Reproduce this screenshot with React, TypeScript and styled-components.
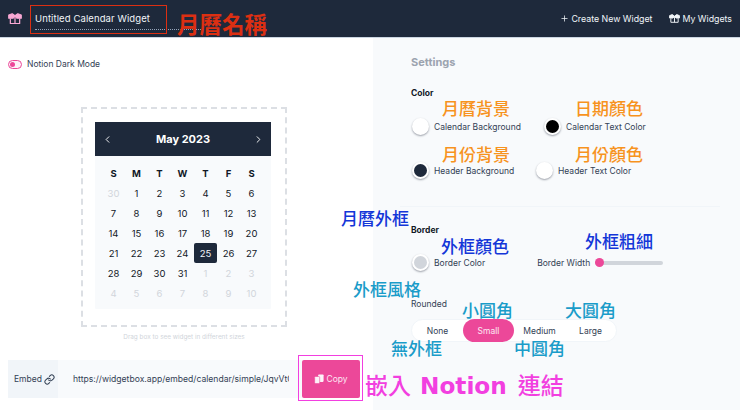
import React from "react";
import styled, { createGlobalStyle } from "styled-components";
import { Plus, Link, ChevronLeft, ChevronRight } from "lucide-react";

const GlobalStyle = createGlobalStyle`
  html, body { margin: 0; padding: 0; background: #fff; }
  body { font-family: Inter, "Noto Sans CJK TC", sans-serif; }
`;

const Page = styled.div`
  position: relative;
  width: 740px;
  height: 410px;
  overflow: hidden;
  display: flex;
  flex-direction: column;
  color: #334155;
`;

const Header = styled.header`
  height: 38px;
  flex: none;
  background: #1e293b;
  display: flex;
  align-items: center;
  padding: 0 8px;
  color: #f1f5f9;
  font-size: 9px;
  border-bottom: 1px solid #cbd5e1;
  box-sizing: border-box;
`;

const TitleField = styled.div`
  margin-left: 13px;
  width: 168px;
  height: 21px;
  line-height: 20px;
  margin-top: 2px;
  font-size: 9.5px;
  box-sizing: border-box;
  border-bottom: 1px dotted #94a3b8;
  letter-spacing: 0.1px;
`;

const HeaderLinks = styled.nav`
  margin-left: auto;
  display: flex;
  align-items: center;
  gap: 17px;
`;

const HeaderLink = styled.span`
  display: flex;
  align-items: center;
  gap: 2px;
  font-size: 8.8px;
`;

const Body = styled.div`
  flex: 1;
  display: flex;
  min-height: 0;
`;

const LeftPane = styled.main`
  width: 373px;
  flex: none;
  box-sizing: border-box;
  padding: 19px 10px 0 8px;
  display: flex;
  flex-direction: column;
`;

const ToggleRow = styled.div`
  display: flex;
  align-items: center;
  gap: 5px;
  font-size: 8.5px;
  height: 14px;
`;

const Toggle = styled.span`
  width: 14px;
  height: 9px;
  border: 1.2px solid #ec4899;
  border-radius: 5px;
  background: #fdf2f8;
  box-sizing: border-box;
  display: flex;
  align-items: center;
  padding-left: 1px;

  &::before {
    content: "";
    width: 5px;
    height: 5px;
    border-radius: 50%;
    background: #ec4899;
  }
`;

const DragBox = styled.div`
  width: 206px;
  height: 220px;
  margin: 36px 0 0 73px;
  box-sizing: border-box;
  border: 2px dashed #dcdfe4;
  padding: 13px 12px;
`;

const Calendar = styled.div`
  width: 176px;
  height: 187px;
  background: #f8fafc;
  border-radius: 1px;
`;

const CalendarHead = styled.div`
  height: 34px;
  background: #1e293b;
  color: #fff;
  display: flex;
  align-items: center;
  justify-content: space-between;
  padding: 0 7px 0 7px;
  font-size: 11px;
  font-weight: 700;
`;

const DayGrid = styled.div`
  display: grid;
  grid-template-columns: repeat(7, 23px);
  grid-auto-rows: 20px;
  padding: 7px 7px 0 7px;
  justify-content: start;
`;

const Cell = styled.div<{ $kind?: "head" | "muted" | "active" }>`
  display: flex;
  align-items: center;
  justify-content: center;
  font-size: 9.5px;
  border-radius: 2px;
  font-weight: ${(p) => (p.$kind === "head" ? 700 : 400)};
  color: ${(p) =>
    p.$kind === "muted" ? "#d1d5db" : p.$kind === "active" ? "#f1f5f9" : "#111827"};
  background: ${(p) => (p.$kind === "active" ? "#1e293b" : "transparent")};
`;

const Caption = styled.div`
  margin: 6px 0 0 73px;
  width: 206px;
  text-align: center;
  font-size: 6.4px;
  color: #d1d5db;
  line-height: 8px;
`;

const EmbedBar = styled.div`
  margin-top: 19px;
  display: flex;
  height: 38px;
`;

const EmbedLabel = styled.div`
  width: 50px;
  flex: none;
  box-sizing: border-box;
  padding-left: 6px;
  background: #f1f5f9;
  display: flex;
  align-items: center;
  gap: 2px;
  font-size: 8.5px;
`;

const EmbedUrl = styled.div`
  width: 244px;
  flex: none;
  background: #f8fafc;
  box-sizing: border-box;
  padding-left: 15px;
`;

const UrlText = styled.div`
  width: 216px;
  line-height: 38px;
  font-size: 8.6px;
  white-space: nowrap;
  overflow: hidden;
`;

const CopyButton = styled.button`
  width: 58px;
  border: 0;
  padding: 0;
  background: #ec4899;
  border-radius: 2px;
  color: #fce7f3;
  font: inherit;
  font-size: 8.5px;
  display: flex;
  align-items: center;
  justify-content: center;
  gap: 2px;
`;

const RightPane = styled.aside`
  flex: 1;
  background: #f8fafc;
  box-sizing: border-box;
  padding: 18px 20px 0 38px;
`;

const SettingsTitle = styled.div`
  font-size: 11px;
  font-weight: 700;
  color: #9ca3af;
  line-height: 13px;
  margin-bottom: 19px;
`;

const GroupLabel = styled.div`
  font-size: 8.5px;
  font-weight: 700;
  color: #111827;
  line-height: 10px;
`;

const ColorGrid = styled.div`
  margin-top: 20px;
  display: grid;
  grid-template-columns: 132px 1fr;
  row-gap: 27px;
`;

const ColorItem = styled.div<{ $shift?: number }>`
  display: flex;
  align-items: center;
  gap: 5px;
  font-size: 8.5px;
  height: 17px;
  margin-left: ${(p) => p.$shift ?? 1}px;
`;

const Swatch = styled.span<{ $color: string }>`
  width: 17px;
  height: 17px;
  flex: none;
  box-sizing: border-box;
  border-radius: 50%;
  background: ${(p) => p.$color};
  border: 2px solid #fff;
  box-shadow: 0 1px 2px rgba(15, 23, 42, 0.4);
`;

const Divider = styled.div`
  height: 1px;
  background: #f1f5f9;
  margin: 27px 0 18px -11px;
`;

const BorderRow = styled.div`
  margin-top: 19px;
  display: flex;
  align-items: center;
`;

const SliderLabel = styled.span`
  margin-left: 52px;
  font-size: 8.5px;
`;

const Slider = styled.div`
  margin-left: 5px;
  width: 68px;
  height: 4px;
  border-radius: 2px;
  background: #d1d5db;
  position: relative;

  &::before {
    content: "";
    position: absolute;
    left: 0;
    top: -2.5px;
    width: 9px;
    height: 9px;
    border-radius: 50%;
    background: #ec4899;
  }
`;

const RoundedLabel = styled.div`
  margin-top: 28px;
  font-size: 8.5px;
  line-height: 10px;
`;

const Segments = styled.div`
  margin-top: 10px;
  width: 206px;
  height: 23px;
  box-sizing: border-box;
  display: grid;
  grid-template-columns: repeat(4, 1fr);
  background: #fff;
  border: 1px solid #f1f5f9;
  border-radius: 12px;
`;

const Segment = styled.span<{ $on?: boolean }>`
  display: flex;
  align-items: center;
  justify-content: center;
  font-size: 8.5px;
  border-radius: 12px;
  margin: -1px 0;
  color: ${(p) => (p.$on ? "#fce7f3" : "#334155")};
  background: ${(p) => (p.$on ? "#ec4899" : "transparent")};
`;

const Note = styled.span<{ $x: number; $y: number; $color: string; $size?: number; $bold?: boolean }>`
  position: absolute;
  left: ${(p) => p.$x}px;
  top: ${(p) => p.$y}px;
  color: ${(p) => p.$color};
  font-size: ${(p) => p.$size ?? 17}px;
  font-weight: ${(p) => (p.$bold ? 700 : 500)};
  line-height: 1;
  white-space: nowrap;
  font-family: "Noto Sans CJK TC", sans-serif;
`;

const NoteBox = styled.span<{ $x: number; $y: number; $w: number; $h: number; $color: string }>`
  position: absolute;
  left: ${(p) => p.$x}px;
  top: ${(p) => p.$y}px;
  width: ${(p) => p.$w}px;
  height: ${(p) => p.$h}px;
  box-sizing: border-box;
  border: 1.5px solid ${(p) => p.$color};
`;

const NotionNote = styled.span`
  font-family: "DejaVu Sans", sans-serif;
  font-weight: 700;
  font-size: 23.2px;
  margin: 0 11px 0 9px;
`;

function GiftBox({ size, color }: { size: number; color: string }) {
  return (
    <svg width={size} height={(size * 12) / 15} viewBox="0 0 15 12" fill="none" stroke={color} strokeWidth="1.3" strokeLinejoin="round">
      <path d="M2.5 6V11.3H12.5V6" />
      <path d="M7.5 3.5V11.3" />
      <path d="M0.8 2.2L4.5 0.8L7.5 3L10.5 0.8L14.2 2.2V5.5H9.5L7.5 3L5.5 5.5H0.8Z" fill={color} />
    </svg>
  );
}

function CopyIcon() {
  return (
    <svg width="10" height="10" viewBox="0 0 12 12" fill="#fdf2f8">
      <rect x="5" y="0.5" width="6.5" height="9" rx="1" />
      <rect x="0.8" y="3" width="6" height="8.5" rx="1" stroke="#ec4899" strokeWidth="0.7" />
    </svg>
  );
}

const days: { n: number; muted?: boolean }[] = [
  { n: 30, muted: true },
  ...Array.from({ length: 31 }, (_, i) => ({ n: i + 1 })),
  ...Array.from({ length: 10 }, (_, i) => ({ n: i + 1, muted: true })),
];

const dayNames = ["S", "M", "T", "W", "T", "F", "S"];

function App() {
  return (
    <Page>
      <GlobalStyle />
      <Header>
        <GiftBox size={14} color="#f9a8d4" />
        <TitleField>Untitled Calendar Widget</TitleField>
        <HeaderLinks>
          <HeaderLink>
            <Plus size={9} strokeWidth={2} />
            Create New Widget
          </HeaderLink>
          <HeaderLink>
            <GiftBox size={11} color="#f1f5f9" />
            My Widgets
          </HeaderLink>
        </HeaderLinks>
      </Header>
      <Body>
        <LeftPane>
          <ToggleRow>
            <Toggle />
            Notion Dark Mode
          </ToggleRow>
          <DragBox>
            <Calendar>
              <CalendarHead>
                <ChevronLeft size={11} strokeWidth={2} />
                May 2023
                <ChevronRight size={11} strokeWidth={2} />
              </CalendarHead>
              <DayGrid>
                {dayNames.map((d, i) => (
                  <Cell key={i} $kind="head">{d}</Cell>
                ))}
                {days.map((d, i) => (
                  <Cell key={i} $kind={d.muted ? "muted" : d.n === 25 ? "active" : undefined}>
                    {d.n}
                  </Cell>
                ))}
              </DayGrid>
            </Calendar>
          </DragBox>
          <Caption>Drag box to see widget in different sizes</Caption>
          <EmbedBar>
            <EmbedLabel>
              Embed
              <Link size={11} strokeWidth={2.2} />
            </EmbedLabel>
            <EmbedUrl>
              <UrlText>https://widgetbox.app/embed/calendar/simple/JqvVtC</UrlText>
            </EmbedUrl>
            <CopyButton>
              <CopyIcon />
              Copy
            </CopyButton>
          </EmbedBar>
        </LeftPane>
        <RightPane>
          <SettingsTitle>Settings</SettingsTitle>
          <GroupLabel>Color</GroupLabel>
          <ColorGrid>
            <ColorItem><Swatch $color="#ffffff" />Calendar Background</ColorItem>
            <ColorItem><Swatch $color="#000000" />Calendar Text Color</ColorItem>
            <ColorItem><Swatch $color="#1e293b" />Header Background</ColorItem>
            <ColorItem $shift={-7}><Swatch $color="#ffffff" />Header Text Color</ColorItem>
          </ColorGrid>
          <Divider />
          <GroupLabel>Border</GroupLabel>
          <BorderRow>
            <ColorItem><Swatch $color="#d1d5db" />Border Color</ColorItem>
            <SliderLabel>Border Width</SliderLabel>
            <Slider />
          </BorderRow>
          <RoundedLabel>Rounded</RoundedLabel>
          <Segments>
            <Segment>None</Segment>
            <Segment $on>Small</Segment>
            <Segment>Medium</Segment>
            <Segment>Large</Segment>
          </Segments>
        </RightPane>
      </Body>

      <NoteBox $x={30} $y={5} $w={137} $h={29} $color="#dc2f12" />
      <Note $x={177} $y={12} $color="#dc2f12" $size={22.5} $bold>月曆名稱</Note>
      <Note $x={442} $y={99} $color="#f7931e">月曆背景</Note>
      <Note $x={575} $y={99} $color="#f7931e">日期顏色</Note>
      <Note $x={442} $y={145} $color="#f7931e">月份背景</Note>
      <Note $x={575} $y={145} $color="#f7931e">月份顏色</Note>
      <Note $x={341} $y={209} $color="#1336d8">月曆外框</Note>
      <Note $x={441} $y={237} $color="#1336d8">外框顏色</Note>
      <Note $x={585} $y={232} $color="#1336d8">外框粗細</Note>
      <Note $x={353} $y={280} $color="#1a9cc9">外框風格</Note>
      <Note $x={462} $y={301} $color="#1a9cc9">小圓角</Note>
      <Note $x={565} $y={301} $color="#1a9cc9">大圓角</Note>
      <Note $x={391} $y={339} $color="#1a9cc9">無外框</Note>
      <Note $x={514} $y={339} $color="#1a9cc9">中圓角</Note>
      <NoteBox $x={298} $y={355} $w={65} $h={46} $color="#f23fe0" />
      <Note $x={365} $y={373} $color="#f23fe0" $size={23}>嵌入<NotionNote>Notion</NotionNote>連結</Note>
    </Page>
  );
}

export default App;
